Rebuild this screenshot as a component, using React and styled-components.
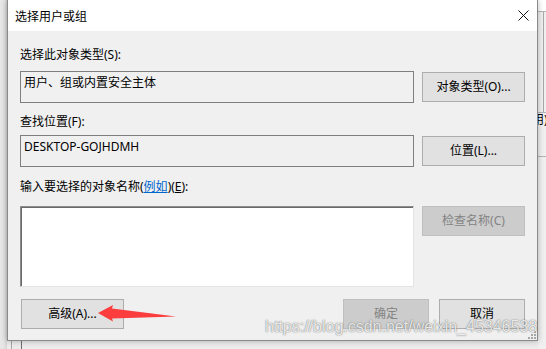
import React from "react";
import styled, { createGlobalStyle } from "styled-components";

const GlobalStyle = createGlobalStyle`
  html, body {
    margin: 0;
    padding: 0;
    background: #ececec;
  }
  body {
    font-family: "Noto Sans", "Noto Sans CJK SC", sans-serif;
  }
`;

const Screen = styled.div`
  position: relative;
  width: 546px;
  height: 349px;
  overflow: hidden;
  display: grid;
  grid-template-columns: 7px 531px 1fr;
  grid-template-rows: 341px 1fr;
  background: #ececec;
`;

const LeftShade = styled.div`
  grid-column: 1;
  grid-row: 1 / 3;
  background: linear-gradient(to right, #e8e8e8, #e4e4e4 60%, #d2d2d2);
`;

const BackRight = styled.div`
  grid-column: 3;
  grid-row: 1 / 3;
  overflow: hidden;
  white-space: nowrap;
  padding-top: 113px;
  font-size: 12px;
  line-height: 13px;
  color: #000;
  background:
    linear-gradient(#fff, #fff) 0 0 / 100% 11px no-repeat,
    linear-gradient(#b4b4b4, #b4b4b4) 0 11px / 100% 1px no-repeat,
    linear-gradient(#a8a8a8, #a8a8a8) 5px 12px / 1px 100px no-repeat,
    linear-gradient(#b4b4b4, #b4b4b4) 0 112px / 100% 1px no-repeat,
    linear-gradient(#b4b4b4, #b4b4b4) 0 156px / 100% 1px no-repeat,
    #f0f0f0;
`;

const BackText = styled.span`
  display: inline-block;
  margin-left: -6px;
`;

const BackBottom = styled.div`
  grid-column: 2 / 3;
  grid-row: 2;
  background:
    linear-gradient(#a8a8a8, #a8a8a8) 4px 0 / 1px 100% no-repeat,
    linear-gradient(#6e6e6e, #6e6e6e) 14px 0 / 1px 100% no-repeat,
    #ececec;
`;

const Dialog = styled.div`
  position: relative;
  z-index: 1;
  grid-column: 2;
  grid-row: 1;
  display: flex;
  flex-direction: column;
  box-sizing: border-box;
  border: 1px solid #8a8a8a;
  border-top: none;
  background: #f0f0f0;
  box-shadow: 0 0 6px rgba(0, 0, 0, 0.28);
`;

const TitleBar = styled.div`
  height: 31px;
  flex: none;
  display: flex;
  align-items: center;
  justify-content: space-between;
  padding: 0 8px 0 7px;
  background: #fff;
  font-size: 12px;
  color: #000;
`;

const CloseIcon = () => (
  <svg width="11" height="11" viewBox="0 0 11 11">
    <path d="M0.5 0.5 L10.5 10.5 M10.5 0.5 L0.5 10.5" stroke="#111" strokeWidth="1" fill="none" />
  </svg>
);

const Body = styled.div`
  flex: 1;
  display: flex;
  flex-direction: column;
  padding: 16px 12px 0 12px;
`;

const Label = styled.div`
  font-size: 12px;
  line-height: 16px;
  color: #000;
  margin-top: ${(p) => p.$mt || 0}px;
  margin-bottom: ${(p) => p.$mb || 0}px;
`;

const Link = styled.span`
  color: #0066cc;
  text-decoration: underline;
`;

const Key = styled.span`
  text-decoration: underline;
`;

const Row = styled.div`
  display: grid;
  grid-template-columns: 394px 103px;
  column-gap: 8px;
  align-items: ${(p) => p.$align || "center"};
`;

const Field = styled.div`
  height: 32px;
  box-sizing: border-box;
  border: 1px solid #7f7f7f;
  background: #f0f0f0;
  padding: 3px 3px;
  font-size: 12px;
  line-height: 16px;
  color: #000;
`;

const NameBox = styled.div`
  height: 81px;
  box-sizing: border-box;
  background: #fff;
  border: 1px solid;
  border-color: #8c8c8c #e3e3e3 #e3e3e3 #8c8c8c;
  box-shadow: inset 1px 1px 0 #6a6a6a;
`;

const Button = styled.button`
  height: 30px;
  width: ${(p) => p.$w || 103}px;
  box-sizing: border-box;
  margin: 0;
  padding: 0;
  border: 1px solid #adadad;
  background: #e1e1e1;
  font-family: "Noto Sans", "Noto Sans CJK SC", sans-serif;
  font-size: 12px;
  line-height: 16px;
  color: #000;
  &:disabled {
    background: #cccccc;
    border-color: #bfbfbf;
    color: #838383;
  }
`;

const Footer = styled.div`
  display: flex;
  align-items: center;
  gap: 10px;
  margin-top: 12px;
  padding-left: 1px;
`;

const Spacer = styled.div`
  flex: 1;
`;

const Grip = styled.svg`
  position: absolute;
  right: 1px;
  bottom: 1px;
`;

const Arrow = styled.svg`
  position: absolute;
  left: 96px;
  top: 302px;
  z-index: 2;
  pointer-events: none;
`;

const Watermark = styled.div`
  position: absolute;
  left: 265px;
  top: 318px;
  z-index: 3;
  font-family: "Liberation Sans", Arial, sans-serif;
  font-size: 16px;
  line-height: 18px;
  white-space: nowrap;
  color: rgba(255, 255, 255, 0.85);
  text-shadow: 0 0 1px rgba(70, 70, 70, 0.75), 0 0 2px rgba(90, 90, 90, 0.35);
  pointer-events: none;
`;

export default function App() {
  return (
    <>
      <GlobalStyle />
      <Screen>
        <LeftShade />
        <Dialog>
          <TitleBar>
            <span>选择用户或组</span>
            <CloseIcon />
          </TitleBar>
          <Body>
            <Label $mb={8}>选择此对象类型(S):</Label>
            <Row>
              <Field>用户、组或内置安全主体</Field>
              <Button>对象类型(O)...</Button>
            </Row>
            <Label $mt={11} $mb={5}>查找位置(F):</Label>
            <Row>
              <Field>DESKTOP-GOJHDMH</Field>
              <Button>位置(L)...</Button>
            </Row>
            <Label $mt={12} $mb={11}>
              输入要选择的对象名称(<Link>例如</Link>)(<Key>E</Key>):
            </Label>
            <Row $align="start">
              <NameBox />
              <Button disabled>检查名称(C)</Button>
            </Row>
            <Footer>
              <Button>高级(A)...</Button>
              <Spacer />
              <Button $w={86} disabled>确定</Button>
              <Button $w={86}>取消</Button>
            </Footer>
          </Body>
          <Grip width="9" height="9" viewBox="0 0 9 9">
            <g fill="#a6a6a6">
              <rect x="7" y="1" width="2" height="2" />
              <rect x="4" y="4" width="2" height="2" />
              <rect x="7" y="4" width="2" height="2" />
              <rect x="1" y="7" width="2" height="2" />
              <rect x="4" y="7" width="2" height="2" />
              <rect x="7" y="7" width="2" height="2" />
            </g>
          </Grip>
        </Dialog>
        <BackRight>
          <BackText>用)</BackText>
        </BackRight>
        <BackBottom />
        <Arrow width="82" height="22" viewBox="0 0 82 22">
          <polygon points="2,11 17,3 16,6.5 80,14.5 16,16.5 17,19.5" fill="#fb3d3d" />
        </Arrow>
        <Watermark>https://blog.csdn.net/weixin_45346538</Watermark>
      </Screen>
    </>
  );
}
